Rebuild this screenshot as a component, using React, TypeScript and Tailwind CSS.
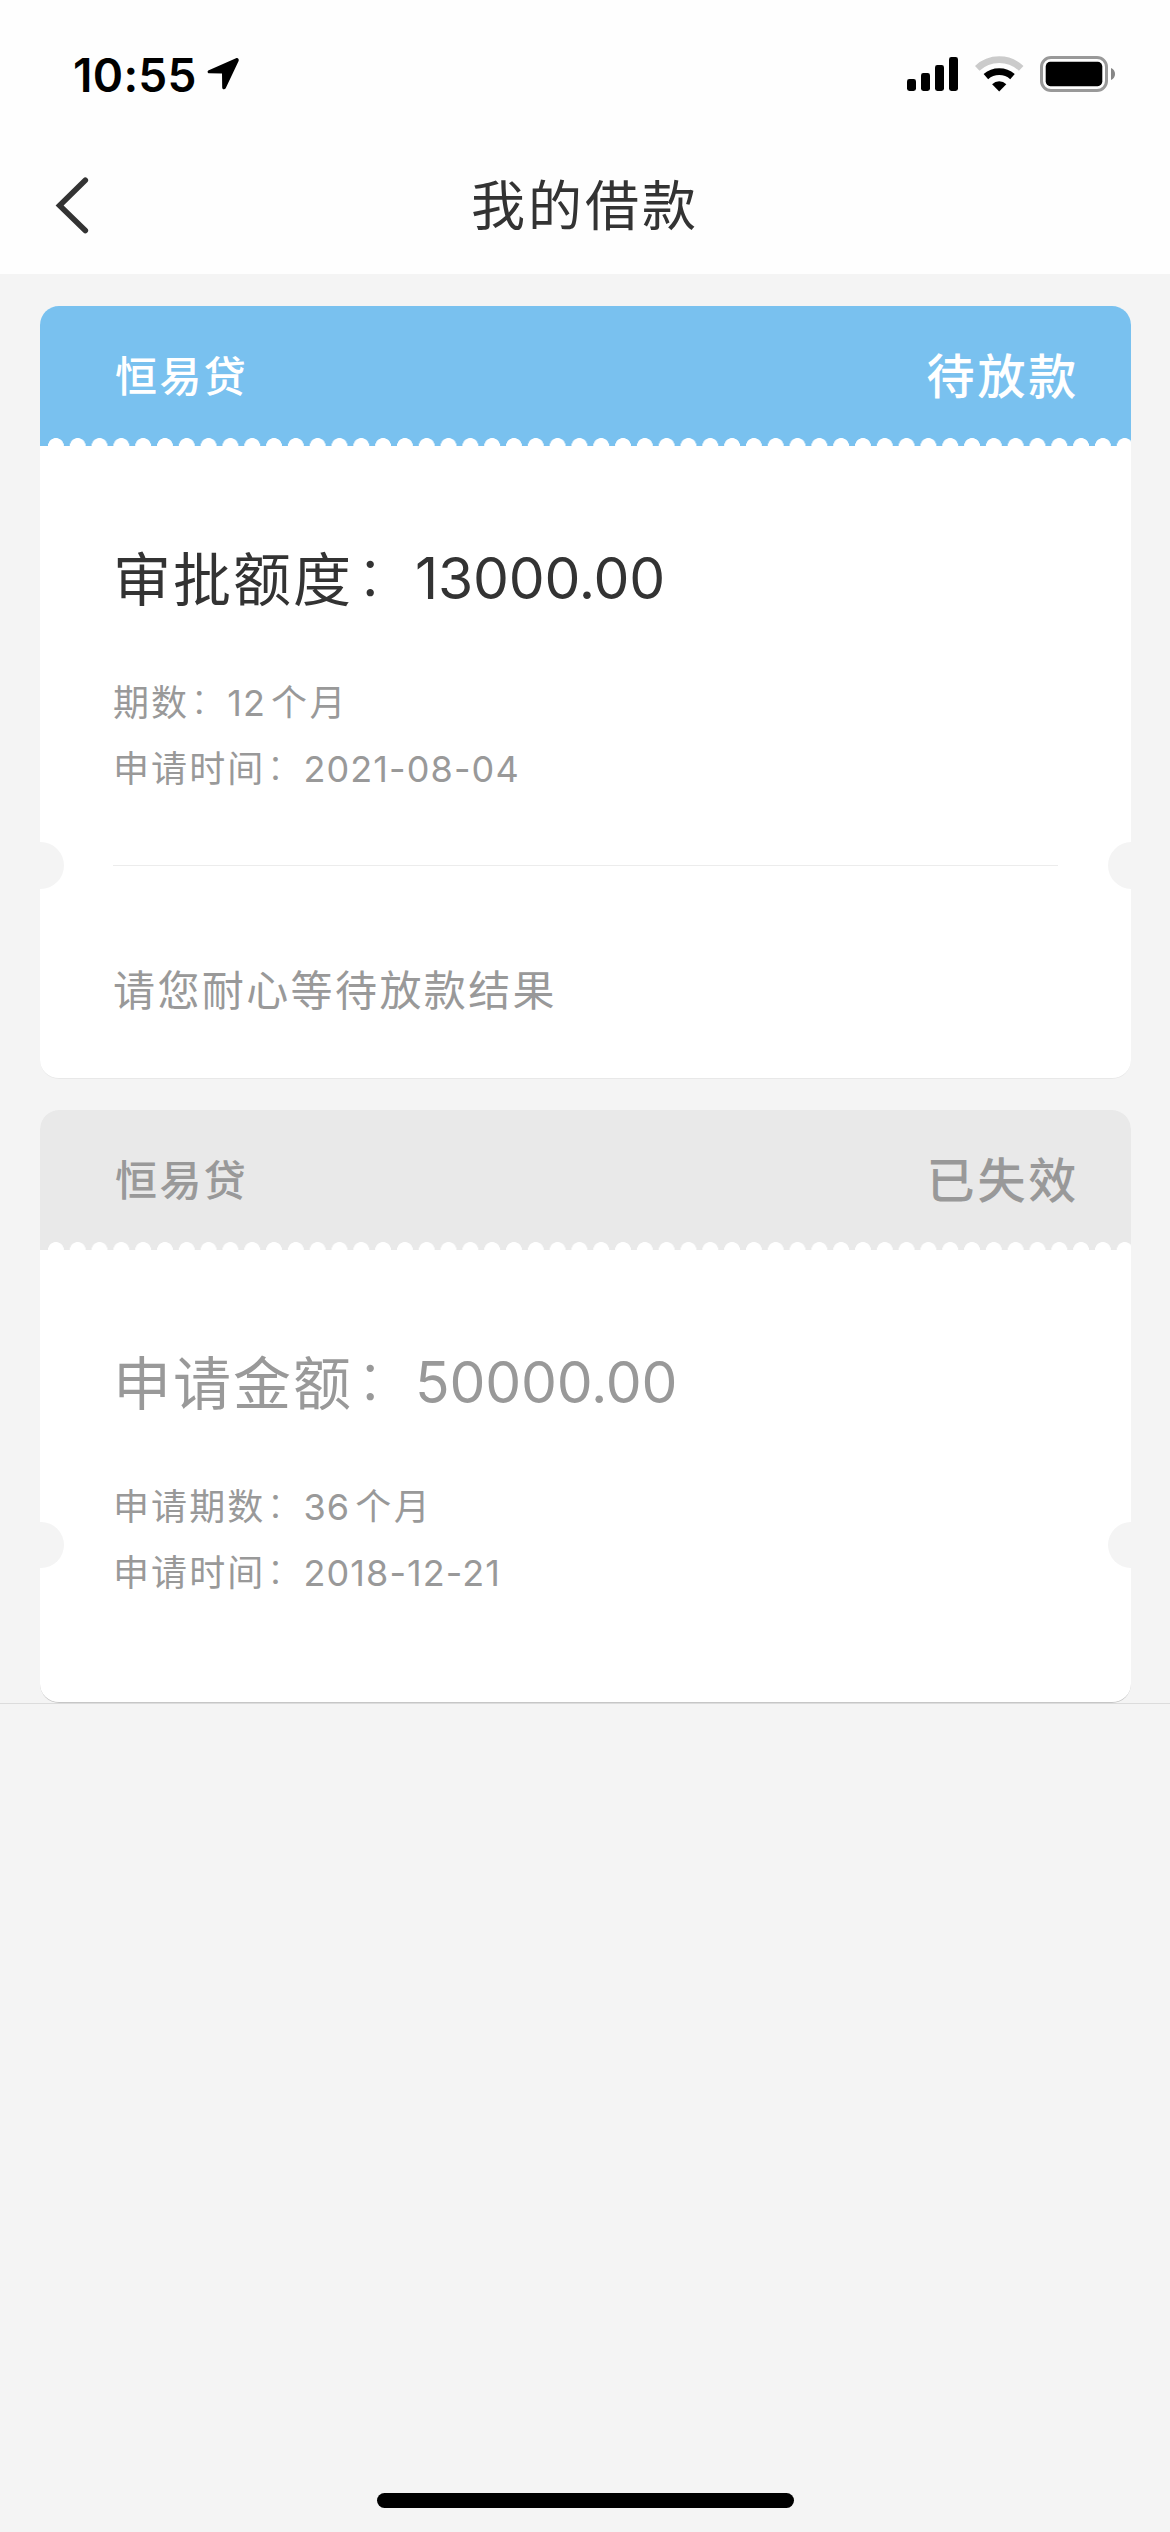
import { clsx } from 'clsx';

type LoanStatus = 'pending' | 'expired';

interface Loan {
  id: string;
  status: LoanStatus;
  name: string;
  statusText: string;
  amountLabel: string;
  amount: string;
  periodLabel: string;
  period: string;
  dateLabel: string;
  date: string;
  tip?: string;
}

const loans: Loan[] = [
  {
    id: 'loan-1',
    status: 'pending',
    name: '恒易贷',
    statusText: '待放款',
    amountLabel: '审批额度',
    amount: '13000.00',
    periodLabel: '期数',
    period: '12',
    dateLabel: '申请时间',
    date: '2021-08-04',
    tip: '请您耐心等待放款结果',
  },
  {
    id: 'loan-2',
    status: 'expired',
    name: '恒易贷',
    statusText: '已失效',
    amountLabel: '申请金额',
    amount: '50000.00',
    periodLabel: '申请期数',
    period: '36',
    dateLabel: '申请时间',
    date: '2018-12-21',
  },
];

const headerStyle: Record<LoanStatus, string> = {
  pending: 'bg-[#79c1ef] text-white',
  expired: 'bg-[#e9e9e9] text-[#999999]',
};

function StatusBar() {
  return (
    <div className="flex h-[132px] items-start justify-between pl-[73px] pr-[54px] pt-[50px]">
      <div className="flex h-12 items-center">
        <span className="w-[133px] whitespace-nowrap pt-px text-[46px] font-semibold leading-[48px] tracking-[0.3px] text-black">10:55</span>
        <svg className="h-[34px] w-[34px]" viewBox="0 0 34 34" fill="#000">
          <path d="M30 1.2 2.8 13.2C1 14 1.4 16.3 3.2 16.3L16 16.5 16.2 30.4C16.3 32.6 18.8 33 19.7 31.2L32.6 4C33.4 2.2 31.8 .4 30 1.2Z" />
        </svg>
      </div>
      <div className="flex h-12 items-center">
        <svg className="h-[38px] w-[51px]" viewBox="0 0 51 38" fill="#000">
          <rect x="0" y="24" width="9" height="12" rx="2.4" />
          <rect x="14" y="18" width="9" height="18" rx="2.4" />
          <rect x="28" y="10" width="9" height="26" rx="2.4" />
          <rect x="42" y="2" width="9" height="34" rx="2.4" />
        </svg>
        <svg className="ml-[17px] h-[38px] w-[49px]" viewBox="0 0 49 38" fill="none">
          <path d="M2.2 13.4A32 32 0 0 1 46.2 13.4" stroke="#cbcbcb" strokeWidth="6.6" />
          <path d="M10.9 21.6A20 20 0 0 1 37.5 21.6" stroke="#000" strokeWidth="6.8" />
          <path d="M24.2 36.4 17.1 29.2A10.3 10.3 0 0 1 31.3 29.2Z" fill="#000" />
        </svg>
        <svg className="ml-4 h-[38px] w-[76px]" viewBox="0 0 76 38">
          <rect x="1.5" y="2.5" width="65" height="33" rx="9.5" fill="none" stroke="#999" strokeWidth="3" />
          <rect x="5.7" y="6.8" width="56.6" height="24.4" rx="4.6" fill="#000" />
          <path d="M71 13C76.4 15 76.4 23 71 25Z" fill="#868686" />
        </svg>
      </div>
    </div>
  );
}

function NavBar() {
  return (
    <div className="grid h-[142px] grid-cols-[200px_1fr_200px]">
      <button className="flex items-start pl-[55px] pt-11" aria-label="返回">
        <svg className="h-[58px] w-[34px]" viewBox="0 0 34 58" fill="none" stroke="#333" strokeWidth="5.6" strokeLinecap="round">
          <path d="M30.3 4.2 4.6 29.5 30.3 54.6" />
        </svg>
      </button>
      <h1 className="pt-[43px] text-center text-[54px] leading-[64px] tracking-[3px] text-[#333333]">我的借款</h1>
    </div>
  );
}

function Field({ label, value, unit }: { label: string; value: string; unit?: string }) {
  return (
    <p className="flex h-[66px] items-center whitespace-nowrap text-4xl leading-[66px] text-[#999999]">
      <span className="tracking-[2.1px]">{label}</span>
      <span className="ml-px mb-1 w-[37px] font-light">：</span>
      <span className="tracking-[1.1px]">{value}</span>
      {unit && <span className="ml-[5px] tracking-[2.6px]">{unit}</span>}
    </p>
  );
}

// Round cut-outs on both sides of the ticket
function Notches({ className }: { className: string }) {
  return (
    <>
      <span className={clsx('absolute left-[-23.5px] w-[47px] rounded-full bg-[#f4f4f4]', className)} />
      <span className={clsx('absolute right-[-23.5px] w-[47px] rounded-full bg-[#f4f4f4]', className)} />
    </>
  );
}

function LoanCard({ loan }: { loan: Loan }) {
  const expired = loan.status === 'expired';

  return (
    <section
      className={clsx(
        'relative overflow-hidden rounded-[19px] bg-white',
        expired ? 'h-[593px] border-b border-[#c6c6c6]' : 'h-[773px] border-b border-[#e8e8e8]'
      )}
    >
      <header className={clsx('flex h-[140px] flex-col justify-between', headerStyle[loan.status])}>
        <div className="flex h-[132px] items-center justify-between pl-[75px] pr-[52px] pt-[10px] font-medium">
          <span className="text-[42px] leading-[60px] tracking-[2.4px]">{loan.name}</span>
          <span className="text-[48px] leading-[60px] tracking-[2.8px]">{loan.statusText}</span>
        </div>
        <div className="ml-[4.5px] h-2 bg-[radial-gradient(circle_8px_at_10.91px_8px,#fff_7.6px,transparent_8.2px)] bg-[length:21.82px_8px] bg-repeat-x" />
      </header>

      <div className="px-[73px] pt-[94px]">
        <p
          className={clsx(
            'flex h-20 items-center whitespace-nowrap text-[57px] leading-[80px]',
            expired ? 'text-[#999999]' : 'text-[#333333]'
          )}
        >
          <span className="text-[58px] tracking-[2px]">{loan.amountLabel}</span>
          <span className="ml-[3px] mb-2 w-[59px] font-light">：</span>
          <span className="mb-[3px] tracking-[-0.2px]">{loan.amount}</span>
        </p>
        <div className="mt-[50px]">
          <Field label={loan.periodLabel} value={loan.period} unit="个月" />
          <Field label={loan.dateLabel} value={loan.date} />
        </div>
        {loan.tip && (
          <div className="mt-[63px] border-t border-[#ececec]">
            <p className="pt-[95px] text-[42px] leading-[60px] tracking-[2.4px] text-[#999999]">{loan.tip}</p>
          </div>
        )}
      </div>

      <Notches className={expired ? 'top-[412px] h-[46px]' : 'top-[536px] h-[47px]'} />
    </section>
  );
}

export default function App() {
  return (
    <div
      lang="zh-CN"
      className="flex h-[2532px] w-[1170px] flex-col bg-[#f4f4f4] font-['Inter','Noto_Sans_CJK_SC',sans-serif]"
    >
      <div className="bg-[#fefefe]">
        <StatusBar />
        <NavBar />
      </div>

      <main className="flex flex-col gap-[31px] border-b border-[#dcdcdc] pl-10 pr-[39px] pt-8">
        {loans.map((loan) => (
          <LoanCard key={loan.id} loan={loan} />
        ))}
      </main>

      <div className="mt-auto flex justify-center pb-6">
        <div className="h-[15px] w-[417px] rounded-full bg-black" />
      </div>
    </div>
  );
}
